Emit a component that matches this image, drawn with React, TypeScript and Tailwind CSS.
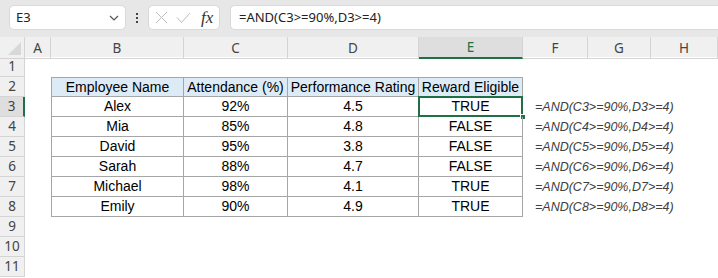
import React from 'react';

// Excel sheet: AND() reward eligibility example, E3 selected, gridlines off.
const COLS = ['A', 'B', 'C', 'D', 'E', 'F', 'G', 'H'];
const GRID = 'grid grid-cols-[25px_26px_133px_104px_131px_104px_65px_63px_1fr]';

const rows = [
  { name: 'Alex', att: '92%', perf: '4.5', ok: 'TRUE' },
  { name: 'Mia', att: '85%', perf: '4.8', ok: 'FALSE' },
  { name: 'David', att: '95%', perf: '3.8', ok: 'FALSE' },
  { name: 'Sarah', att: '88%', perf: '4.7', ok: 'FALSE' },
  { name: 'Michael', att: '98%', perf: '4.1', ok: 'TRUE' },
  { name: 'Emily', att: '90%', perf: '4.9', ok: 'TRUE' },
];

const cellFont = "font-['Liberation_Sans',sans-serif] text-[14px] text-black";

function RowHead({ n, active }: { n: number; active?: boolean }) {
  return (
    <div
      className={`flex h-[20px] items-center justify-center border-b border-r border-[#d4d4d4] text-[13.5px] text-[#444] ${
        active ? 'border-r-2 border-r-[#1e7145] bg-[#dedede] text-[#1e7145]' : 'bg-[#f0f0f0]'
      }`}
    >
      {n}
    </div>
  );
}

function Cell({ children, className = '' }: { children?: React.ReactNode; className?: string }) {
  return <div className={`flex h-[20px] items-center justify-center ${cellFont} ${className}`}>{children}</div>;
}

export default function App() {
  return (
    <div className="h-[278px] w-[718px] overflow-hidden bg-white font-['Noto_Sans',sans-serif]">
      {/* formula bar */}
      <div className="flex h-[37px] items-start gap-[10px] bg-[#e7e7e7] pl-[9px] pt-[5px]">
        <div className="flex h-[25px] w-[117px] items-center justify-between rounded-[5px] border border-[#d9d9d9] bg-white pl-[6px] pr-[6px] text-[13px] text-[#222]">
          <span>E3</span>
          <svg width="10" height="6" viewBox="0 0 10 6" fill="none">
            <path d="M1 1l4 4 4-4" stroke="#555" strokeWidth="1.2" />
          </svg>
        </div>
        <div className="flex h-[25px] flex-col items-center justify-center gap-[2px]">
          <span className="h-[2px] w-[2px] bg-[#444]" />
          <span className="h-[2px] w-[2px] bg-[#444]" />
          <span className="h-[2px] w-[2px] bg-[#444]" />
        </div>
        <div className="flex h-[25px] w-[72px] items-center gap-[8px] rounded-[5px] border border-[#d9d9d9] bg-white pl-[6px]">
          <svg width="13" height="13" viewBox="0 0 13 13">
            <path d="M1 1l11 11M12 1L1 12" stroke="#bcbcbc" strokeWidth="1" />
          </svg>
          <svg width="15" height="12" viewBox="0 0 15 12" fill="none">
            <path d="M1 5.5l4.5 5L14 1" stroke="#bcbcbc" strokeWidth="1" />
          </svg>
          <span className="ml-[2px] font-['Liberation_Serif',serif] text-[17px] italic text-[#333]">fx</span>
        </div>
        <div className="flex h-[25px] flex-1 items-center rounded-l-[5px] border border-r-0 border-[#d9d9d9] bg-white pl-[8px] text-[13px] text-[#222]">
          =AND(C3&gt;=90%,D3&gt;=4)
        </div>
      </div>

      {/* column headers */}
      <div className={`${GRID} h-[20px] bg-[#f0f0f0]`}>
        <div className="relative border-b border-r border-[#d4d4d4]">
          <svg className="absolute bottom-[3px] right-[3px]" width="13" height="13" viewBox="0 0 13 13">
            <path d="M13 0V13H0Z" fill="#d8d8d8" />
          </svg>
        </div>
        {COLS.map((c) => (
          <div
            key={c}
            className={`flex items-center justify-center border-r border-[#d4d4d4] text-[13.5px] ${
              c === 'E'
                ? 'border-b-2 border-b-[#1e7145] bg-[#dedede] text-[#1e7145]'
                : 'border-b text-[#444]'
            }`}
          >
            {c}
          </div>
        ))}
      </div>

      {/* row 1 */}
      <div className={GRID}>
        <RowHead n={1} />
      </div>

      {/* row 2: table header */}
      <div className={GRID}>
        <RowHead n={2} />
        <div />
        <Cell className="border border-[#a6a6a6] bg-[#ddebf7]">Employee Name</Cell>
        <Cell className="border-y border-r border-[#a6a6a6] bg-[#ddebf7]">Attendance (%)</Cell>
        <Cell className="border-y border-r border-[#a6a6a6] bg-[#ddebf7]">Performance Rating</Cell>
        <Cell className="border-y border-r border-[#a6a6a6] bg-[#ddebf7]">Reward Eligible</Cell>
      </div>

      {rows.map((r, i) => {
        const n = i + 3;
        const sel = n === 3;
        return (
          <div key={n} className={GRID}>
            <RowHead n={n} active={sel} />
            <div />
            <Cell className="border-x border-b border-[#a6a6a6]">{r.name}</Cell>
            <Cell className="border-b border-r border-[#a6a6a6]">{r.att}</Cell>
            <Cell className="border-b border-r border-[#a6a6a6]">{r.perf}</Cell>
            <Cell className="relative border-b border-r border-[#a6a6a6]">
              {sel && (
                <>
                  <span className="absolute -left-px -top-px bottom-[-1px] right-[-1px] border-2 border-[#1e7145]" />
                  <span className="absolute bottom-[-4px] right-[-4px] h-[6px] w-[6px] border border-white bg-[#1e7145]" />
                </>
              )}
              {r.ok}
            </Cell>
            <div className="flex h-[20px] items-center pl-[12px]">
              <span className="whitespace-nowrap font-['Liberation_Sans',sans-serif] text-[12.5px] italic text-[#404040]">
                =AND(C{n}&gt;=90%,D{n}&gt;=4)
              </span>
            </div>
          </div>
        );
      })}

      {[9, 10, 11].map((n) => (
        <div key={n} className={GRID}>
          <RowHead n={n} />
        </div>
      ))}
    </div>
  );
}
